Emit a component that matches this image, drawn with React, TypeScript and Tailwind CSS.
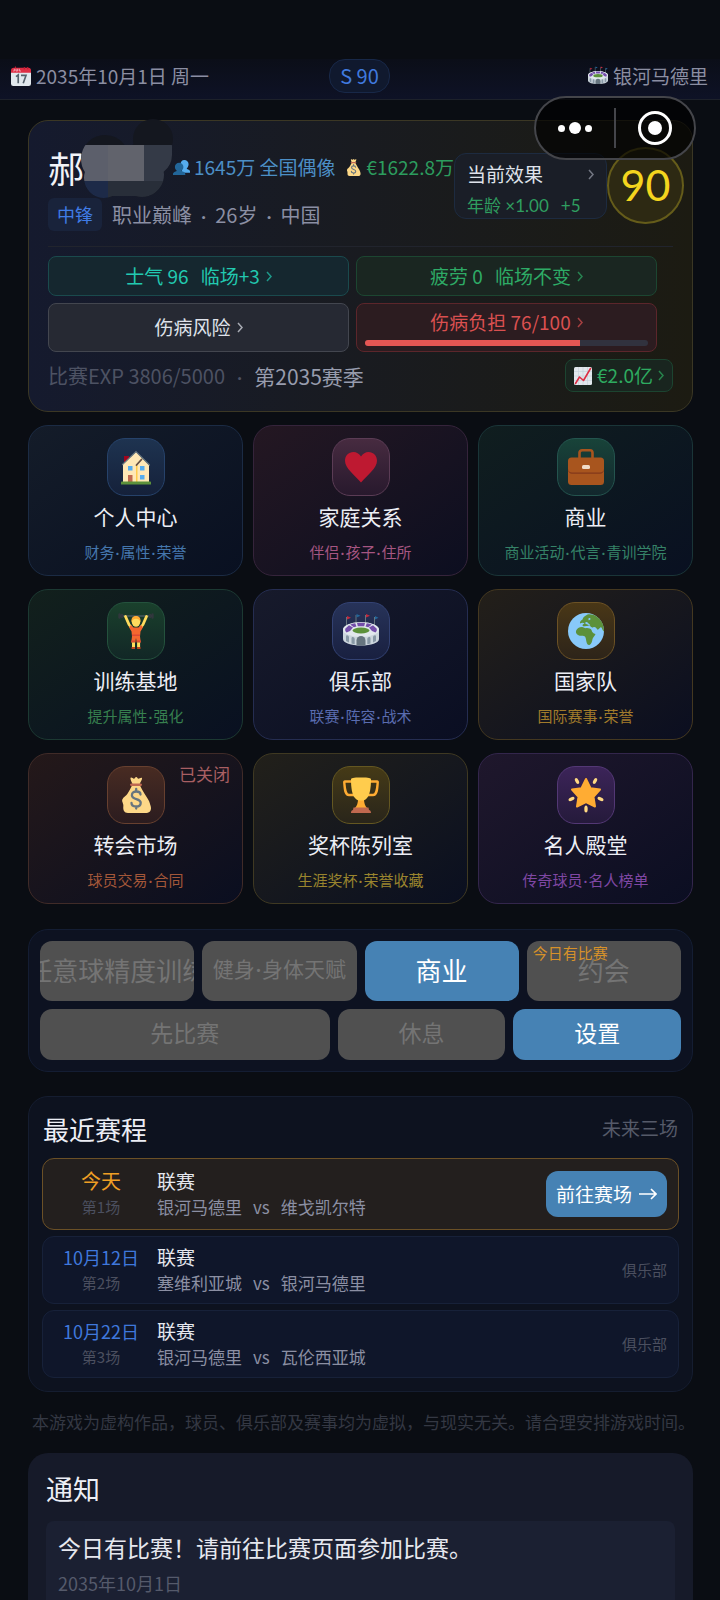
import React from 'react';

type IconProps = { className?: string };

function CalendarIcon({ className }: IconProps) {
    return (
        <svg viewBox="0 0 36 36" className={className} aria-hidden="true">
            <path fill="#e1e8ed" d="M36 32a4 4 0 0 1-4 4H4a4 4 0 0 1-4-4V9h36z" />
            <path fill="#dd2e44" d="M5 3h26a5 5 0 0 1 5 5v4H0V8a5 5 0 0 1 5-5z" />
            <path stroke="#f4abba" strokeWidth="1.6" fill="none" d="M6 5v4H4M9 5v4h3V5M15 5v4h3" />
            <path stroke="#be1931" strokeWidth="2" d="M24 2v4M30 2v4M8 1v3" />
            <path stroke="#55626c" strokeWidth="3" fill="none" d="m9 19 4-3v15M18 17h9l-5 14" />
        </svg>
    );
}

function StadiumIcon({ className }: IconProps) {
    return (
        <svg viewBox="0 0 36 36" className={className} aria-hidden="true">
            <path stroke="#66757f" strokeWidth="1" d="M3.500 4v10M13 2v8M22.500 2v8M31.500 4v10" />
            <path fill="#c4283c" d="m4 3 4 1.800-4 1.800zM23 1l4 1.800-4 1.800z" />
            <path fill="#226699" d="m13.500 1 4 1.800-4 1.800zM32 3l3.500 1.800L32 6.600z" />
            <path fill="#ccd6dd" d="M0 17c0-4.400 8-7.500 18-7.500S36 12.600 36 17v9c0 4-8 6.500-18 6.500S0 30 0 26z" />
            <ellipse cx="18" cy="16.500" rx="18" ry="7.500" fill="#e1e8ed" />
            <g fill="#744eaa">
                <path d="m2.500 15.500 3.500-3.300 4 2.300-3 3.500-3.500 1.500c-1.300-1.200-1.700-2.500-1-4z" />
                <path d="M7.200 11.500c1.600-.6 3.300-1 5-1.300l1.300 3.300-2.800.8zM14 10c2.700-.2 5.300-.2 8 0l-.8 3.300h-6.400zM23.800 10.200c1.700.3 3.400.7 5 1.300l-3.500 2.800-2.800-.8z" />
                <path d="M33.500 15.500 30 12.200l-4 2.300 3 3.500 3.500 1.500c1.300-1.200 1.700-2.500 1-4z" />
            </g>
            <ellipse cx="18" cy="17.500" rx="8.500" ry="2.900" fill="#5c913b" />
            <path fill="#8899a6" d="M3 23.500c0-2.300 3-1.300 3 .700v5.300l-3-1.500zM8.500 25.500c0-2.300 3.200-1.600 3.200.500v5.200l-3.200-.700zM33 23.500c0-2.300-3-1.300-3 .700v5.300l3-1.500zM27.500 25.500c0-2.300-3.200-1.600-3.200.5v5.200l3.200-.7z" />
            <path fill="#66757f" d="M13.500 32.400v-4.900a4.500 4.500 0 0 1 9 0v4.900a60 60 0 0 1-9 0z" />
        </svg>
    );
}

function PeopleIcon({ className }: IconProps) {
    return (
        <svg viewBox="0 0 36 36" className={className} aria-hidden="true">
            <path fill="#55acee" d="M24 2c5 0 9 3.500 9 9 0 4-2 7-4 9 0 2 6 1 7 6v3H19V18c-2-2-3-4-3-7 0-5.500 3-9 8-9z" />
            <path fill="#226699" d="M13 8c5 0 9 3.500 9 9 0 4-2 6-4 8 0 2 8 1.500 8 7v2H0v-2c0-5 8-5 8-7-2-2-4-4-4-8 0-5.500 4-9 9-9z" />
        </svg>
    );
}

function MoneyBagIcon({ className }: IconProps) {
    return (
        <svg viewBox="0 0 36 36" className={className} aria-hidden="true">
            <path fill="#fdd888" d="M31.900 26.500c-.600-3-3.100-6.300-5.200-9.600-1.500-2.300-3.200-5.600-4.700-8.400H14c-1.500 2.800-3 6.100-4.700 8.400-1 1.700-4 2.800-5 5.600-.800 2.600 1.600 4 1 7C5 33 6 36 10 36h17c4.500 0 6-2 6-5 0-1.500-.700-3-1.100-4.500z" />
            <path fill="#fdd888" d="M14.500 7c-1-2.400-2.300-4.800-2-6 1-1.300 2.400.7 3.400.7S17.200 0 18.200 0s1.300 1.700 2.300 1.700S23 0 24 1c.4 1.400-1.500 3.600-2.300 6z" />
            <path fill="#bf6952" d="M13 6.500h10c1.300 0 1.300 2.500 0 2.500H13c-1.300 0-1.300-2.500 0-2.500z" />
            <path stroke="#67757f" strokeWidth="2.300" strokeLinecap="round" fill="none" d="M22.500 17.500c0-2-2-3-4.300-3s-4.300 1.300-4.300 3.700c0 5 8.800 2.700 8.800 7.500 0 2.400-2 3.800-4.500 3.800s-4.700-1.200-4.700-3.500M18.200 11.800v2.500M18.200 29.500v2" />
        </svg>
    );
}

function ChartIcon({ className }: IconProps) {
    return (
        <svg viewBox="0 0 36 36" className={className} aria-hidden="true">
            <rect width="36" height="36" rx="3" fill="#e1e8ed" />
            <path stroke="#c3ced6" strokeWidth="1.200" d="M0 9h36M0 18h36M0 27h36M9 0v36M18 0v36M27 0v36" />
            <path stroke="#dd2e44" strokeWidth="3.200" strokeLinecap="round" strokeLinejoin="round" fill="none" d="m3 33 8-13 8 7L33 3" />
        </svg>
    );
}

function HouseIcon({ className }: IconProps) {
    return (
        <svg viewBox="0 0 36 36" className={className} aria-hidden="true">
            <path fill="#a0041e" d="M6 7h5v7H6z" />
            <path fill="#ffe8b6" d="M5 15 18 3l13 13v17H5z" />
            <path fill="#ffcc4d" d="M18 16h1.500v17H18z" />
            <path stroke="#66757f" strokeWidth="1.200" strokeLinecap="round" fill="none" d="M4.500 15.500 18 2.500l13.500 13.500" />
            <path stroke="#664f43" strokeWidth="1.800" strokeLinecap="round" d="m18.500 16 5-5.500" />
            <path fill="#55acee" d="M10 17h4.500v4.500H10zM22 17h4.500v4.500H22zM22 26h4.500v4.500H22z" />
            <path fill="#c1694f" d="M10 26h4.500v7H10z" />
            <path fill="#5c913b" d="M3.500 32.500h29a1 1 0 0 1 .500 1V35.500H3v-2a1 1 0 0 1 .500-1z" />
        </svg>
    );
}

function HeartIcon({ className }: IconProps) {
    return (
        <svg viewBox="0 0 36 36" className={className} aria-hidden="true">
            <path fill="#be1931" d="M18 7.500C16 4.500 13.500 3 10.500 3 5.500 3 2 6.800 2 11.700c0 7.500 9.500 14 16 21.800 6.500-7.800 16-14.300 16-21.800C34 6.800 30.500 3 25.500 3c-3 0-5.500 1.500-7.500 4.500z" />
        </svg>
    );
}

function BriefcaseIcon({ className }: IconProps) {
    return (
        <svg viewBox="0 0 36 36" className={className} aria-hidden="true">
            <path fill="none" stroke="#a8551e" strokeWidth="2.600" d="M11.500 9.500V3.800a2.500 2.500 0 0 1 2.500-2.500h8a2.500 2.500 0 0 1 2.500 2.500v5.700" />
            <rect y="8.500" width="36" height="27.500" rx="3.500" fill="#a8551e" />
            <path fill="#82381b" d="M0 19.500c0 2.500 1.800 4 4 4h28c2.200 0 4-1.500 4-4v1c0 2.500-1.800 4.200-4 4.200H4c-2.200 0-4-1.700-4-4.200z" />
            <rect x="14" y="16" width="8" height="4" rx="1.500" fill="#f0dcc8" />
        </svg>
    );
}

function LifterIcon({ className }: IconProps) {
    return (
        <svg viewBox="0 0 36 36" className={className} aria-hidden="true">
            <path stroke="#4a5a60" strokeWidth="1.300" strokeLinecap="round" d="M2 3h32" />
            <path stroke="#31373d" strokeWidth="2.400" strokeLinecap="round" d="M1.500 1.500v3M34.500 1.500v3M4 2v2M32 2v2" />
            <path stroke="#ffdc5d" strokeWidth="2.800" strokeLinecap="round" strokeLinejoin="round" fill="none" d="m7.500 3.500 3.500 8 3 4M28.500 3.500l-3.500 8-3 4" />
            <path fill="#f4672f" d="m13 12 2.500 2.500h5L23 12l2 2.200-2.500 4.300-.5 5 .8 6h-4l-.8-4.500-.8 4.500h-4l.8-6-.5-5-2.500-4.300z" />
            <ellipse cx="18" cy="8.500" rx="4.300" ry="5.200" fill="#ffdc5d" />
            <path fill="#ffac33" d="M13.500 9C13 5 15 3 18 3s5 2 4.500 6c-1-2.300-2.300-3.300-4.500-3.300S14.500 6.700 13.500 9z" />
            <path fill="#dd4a33" d="M14 21.500h8v1.500h-8zM13.400 27.500h4v2h-4zM18.700 27.500h4v2h-4z" />
            <path fill="#ffdc5d" d="M14 29.500h3V34h-3zM19.100 29.500h3V34h-3z" />
            <path fill="#c1461f" d="M13.600 34h3.400v2h-3.400zM19.100 34h3.400v2h-3.400z" />
        </svg>
    );
}

function GlobeIcon({ className }: IconProps) {
    return (
        <svg viewBox="0 0 36 36" className={className} aria-hidden="true">
            <circle cx="18" cy="18" r="18" fill="#88c9f9" />
            <path fill="#5c913b" d="M12 10.500c-.500-2 1-3 2.500-4 .500-2 2-3.500 5-5C25 .500 31 4 34 9.500c1.500 3 2 6 2 9-1.500-.500-1.500-3-3-4.500-1.500 1-3 4-4 2-1-1.500-2.500-2.500-4-1.500-1 0-2.500-.500-3-2-1.500-.500-2.500 1-4 .500-1.500.500-3 .500-3.500-.500 0-1 1-1.500 2-2-.800-1.300-3-1-4.500 0z" />
            <path fill="#5c913b" d="M8 18c1-2.500 3-4 6-4 2 .500 3 1.500 5 1 2 .300 3.500.500 4.500 2 .500 2 1.500 3.500 4 4-.500 2-2.500 3-3 5-.300 2-1 5-3 6-1.500.500-2.500-1-3-3s-.500-4-1.500-5.500c-1.500-1.500-4-.500-6-1-2-.500-3.500-2.500-3-4.500z" />
            <path fill="#88c9f9" d="M17 10c1-1.500 2.500-1 3 0s2 1 2 2-1.500 0-2.500-.500-2-.500-2.500-1.500zM20.500 5.500c.800-.800 2-.500 2 .500s-1.500 1.500-2 1z" />
        </svg>
    );
}

function TrophyIcon({ className }: IconProps) {
    return (
        <svg viewBox="0 0 36 36" className={className} aria-hidden="true">
            <path fill="none" stroke="#ffac33" strokeWidth="2.400" strokeLinejoin="round" d="M10 4.500H2c-.700 0-.800.500-.700 1.200C1.800 12 2 18 6 18h5M26 4.500h8c.700 0 .800.500.700 1.200C34.200 12 34 18 30 18h-5" />
            <path fill="#ffac33" d="M15 22h6c0 4 1 7 3 9H12c2-2 3-5 3-9z" />
            <path fill="#ffcc4d" d="M8 2.500C8 1 10 .500 18 .500s10 .500 10 2C28 10 27 18 24 21c-1.500 2-3 2.500-6 2.500S13.500 23 12 21C9 18 8 10 8 2.500z" />
            <path fill="#c1694f" d="M10.500 30.500h15l.500 2.500c2 0 2 3 2 3H8s0-3 2-3z" />
        </svg>
    );
}

function StarIcon({ className }: IconProps) {
    return (
        <svg viewBox="0 0 36 36" className={className} aria-hidden="true">
            <path fill="#ffac33" stroke="#ffac33" strokeWidth="2" strokeLinejoin="round" d="m18 2 4.500 9.200 9.500 1.300-6.500 7.300 1.500 9.700-9-4.500-9 4.500 1.500-9.700L4 12.500l9.500-1.300z" />
            <g fill="#ffd983">
                <ellipse cx="9" cy="4" rx="1.700" ry="3.200" transform="rotate(-28 9 4)" />
                <ellipse cx="27" cy="4" rx="1.700" ry="3.200" transform="rotate(28 27 4)" />
                <ellipse cx="3.500" cy="22" rx="1.700" ry="3.200" transform="rotate(66 3.500 22)" />
                <ellipse cx="32.500" cy="22" rx="1.700" ry="3.200" transform="rotate(-66 32.500 22)" />
                <ellipse cx="18" cy="32" rx="1.700" ry="3.500" />
            </g>
        </svg>
    );
}

/* Pixelated smudge that hides the given name */
function NameMask() {
    return (
        <svg viewBox="0 0 96 84" className="absolute -top-[30px] left-[30px] z-10 h-[84px] w-24" aria-hidden="true">
            <defs>
                <clipPath id="smudge">
                    <circle cx="75" cy="22" r="20" />
                    <circle cx="73" cy="38" r="21" />
                    <circle cx="27" cy="42" r="24" />
                    <circle cx="26" cy="61" r="20" />
                    <circle cx="64" cy="58" r="22" />
                    <rect x="26" y="28" width="45" height="51" />
                    <rect x="71" y="29" width="23" height="8" />
                </clipPath>
            </defs>
            <g clipPath="url(#smudge)">
                <rect width="96" height="84" fill="#14171f" />
                <rect y="28" width="30" height="36" fill="#5c5f6b" />
                <rect x="30" y="28" width="36" height="36" fill="#61636c" />
                <rect x="66" y="28" width="30" height="36" fill="#343a47" />
                <rect y="64" width="30" height="20" fill="#1d2a48" />
                <rect x="30" y="64" width="66" height="20" fill="#282e39" />
            </g>
        </svg>
    );
}

const MENU = [
    { title: '个人中心', sub: '财务·属性·荣誉', icon: HouseIcon, card: 'border-[#1b2b44] from-[#141c29] to-[#091021]', tile: 'border-[#26426a] from-[#1e3350] to-[#15213a]', text: 'text-[#4577ad]' },
    { title: '家庭关系', sub: '伴侣·孩子·住所', icon: HeartIcon, card: 'border-[#35243b] from-[#241722] to-[#0c0e20]', tile: 'border-[#5b3c55] from-[#472b40] to-[#28192d]', text: 'text-[#a65682]' },
    { title: '商业', sub: '商业活动·代言·青训学院', icon: BriefcaseIcon, card: 'border-[#1a3538] from-[#101e1f] to-[#091021]', tile: 'border-[#24544e] from-[#184339] to-[#12272d]', text: 'text-[#358267]' },
    { title: '训练基地', sub: '提升属性·强化', icon: LifterIcon, card: 'border-[#1c3932] from-[#12201c] to-[#091021]', tile: 'border-[#24523d] from-[#1a402c] to-[#122726]', text: 'text-[#37804f]' },
    { title: '俱乐部', sub: '联赛·阵容·战术', icon: StadiumIcon, card: 'border-[#252d51] from-[#171a2b] to-[#0a0e22]', tile: 'border-[#334273] from-[#273359] to-[#192040]', text: 'text-[#5a6cb0]' },
    { title: '国家队', sub: '国际赛事·荣誉', icon: GlobeIcon, card: 'border-[#443820] from-[#231f19] to-[#0b0e20]', tile: 'border-[#6c5225] from-[#493716] to-[#2d2419]', text: 'text-[#a17b2b]' },
    { title: '转会市场', sub: '球员交易·合同', icon: MoneyBagIcon, card: 'border-[#402b28] from-[#241819] to-[#0a0e20]', tile: 'border-[#67402f] from-[#482b22] to-[#2b1c1f]', text: 'text-[#a35739]', badge: '已关闭' },
    { title: '奖杯陈列室', sub: '生涯奖杯·荣誉收藏', icon: TrophyIcon, card: 'border-[#3f3922] from-[#22201a] to-[#0a0f20]', tile: 'border-[#645721] from-[#453a16] to-[#29251a]', text: 'text-[#9a852e]' },
    { title: '名人殿堂', sub: '传奇球员·名人榜单', icon: StarIcon, card: 'border-[#33264c] from-[#1f172c] to-[#0b0e22]', tile: 'border-[#533875] from-[#3c2459] to-[#251a3b]', text: 'text-[#7f47a3]' },
];

const MATCHES = [
    { date: '今天', round: '第1场', type: '联赛', home: '银河马德里', away: '维戈凯尔特', today: true },
    { date: '10月12日', round: '第2场', type: '联赛', home: '塞维利亚城', away: '银河马德里', today: false },
    { date: '10月22日', round: '第3场', type: '联赛', home: '银河马德里', away: '瓦伦西亚城', today: false },
];

/* The CJK middle dot is a full em wide, so dots are set in the latin face */
function Dotted({ text, className }: { text: string; className: string }) {
    return (
        <span className={`inline-flex items-center whitespace-nowrap ${className}`}>
            {text.split('·').map((part, i) => (
                <React.Fragment key={part}>
                    {i > 0 && <span className="font-['Lato',sans-serif]">·</span>}
                    <span>{part}</span>
                </React.Fragment>
            ))}
        </span>
    );
}

function Chevron({ className }: IconProps) {
    return (
        <svg viewBox="0 0 6 11" className={className} aria-hidden="true">
            <path d="m1 1 4 4.500-4 4.500" fill="none" stroke="currentColor" strokeWidth="1.500" />
        </svg>
    );
}

function TopBar() {
    return (
        <header className="grid grid-cols-[1fr_auto_1fr] items-center border-b border-[#1d212a] bg-gradient-to-b from-[#0b0e18] to-[#0e1226] pr-3 pb-[6px] pl-[11px] text-[19px] leading-8 text-[#8b8ea2]">
            <div className="flex items-center gap-[5px]">
                <CalendarIcon className="size-5" />
                <span>2035年10月1日 周一</span>
            </div>
            <div className="rounded-2xl border border-[#182848] bg-[#10192e] px-[10px] text-xl leading-8 text-[#4079de]">S 90</div>
            <div className="flex items-center justify-end gap-[5px]">
                <StadiumIcon className="size-5" />
                <span>银河马德里</span>
            </div>
        </header>
    );
}

/* Host app capsule, floats over the page */
function Capsule() {
    return (
        <div className="absolute top-24 right-6 z-20 flex h-16 w-[162px] items-center rounded-full border-2 border-[#44454a] bg-black/65">
            <button type="button" aria-label="更多" className="flex flex-1 items-center justify-center gap-1">
                <span className="size-[7px] rounded-full bg-white" />
                <span className="size-3 rounded-full bg-white" />
                <span className="size-[7px] rounded-full bg-white" />
            </button>
            <span className="h-10 w-[2px] bg-[#44454a]" />
            <button type="button" aria-label="关闭" className="flex flex-1 items-center justify-center">
                <span className="flex size-[34px] items-center justify-center rounded-full border-[3px] border-white">
                    <span className="size-[14px] rounded-full bg-white" />
                </span>
            </button>
        </div>
    );
}

function PlayerCard() {
    return (
        <section className="rounded-[20px] border border-[#3b3724] bg-gradient-to-r from-[#151a2e] via-[#191b20] to-[#1c1b12] px-[19px] pt-[26px] pb-[19px]">
            <div className="flex items-start">
                <div className="flex-1">
                    <div className="relative flex h-10 items-center justify-between">
                        <h1 className="text-4xl text-[#f1f3f8]">郝</h1>
                        <NameMask />
                        <div className="flex items-center gap-[10px] text-[19px] whitespace-nowrap">
                            <span className="flex items-center gap-1 text-[#4c8fc6]">
                                <PeopleIcon className="size-[17px]" />
                                1645万 全国偶像
                            </span>
                            <span className="flex items-center gap-1 text-[#2c9d5e]">
                                <MoneyBagIcon className="size-[17px]" />
                                €1622.8万
                            </span>
                        </div>
                    </div>
                    <div className="mt-[11px] flex h-[33px] items-center gap-[10px] text-xl text-[#8b8fa3]">
                        <span className="rounded-md bg-[#19233b] px-[9px] text-lg leading-[33px] text-[#407ce6]">中锋</span>
                        <Dotted text="职业巅峰·26岁·中国" className="gap-[9px]" />
                    </div>
                </div>
                <button type="button" className="mt-[6px] h-[66px] w-[153px] rounded-xl border border-[#1d2b40] bg-[#1a1e27] px-3 pt-[7px] text-left leading-[26px]">
                    <span className="flex items-center justify-between text-[19px] text-[#dfe2ea]">
                        当前效果
                        <Chevron className="h-[11px] w-[6px] text-[#737783]" />
                    </span>
                    <span className="mt-[6px] flex gap-3 font-['Lato','Noto_Sans_CJK_SC',sans-serif] text-[17px] text-[#2f9e60]">
                        <span>年龄 ×1.00</span>
                        <span>+5</span>
                    </span>
                </button>
                <div className="-mr-[11px] flex size-[77px] items-center justify-center rounded-full border-2 border-[#655c1a] bg-[#2d2913] font-['Lato',sans-serif] text-[43px] text-[#f4d51e]">90</div>
            </div>

            <div className="mt-[15px] border-t border-[#21242d] pt-[9px]">
                <div className="mr-4 grid grid-cols-2 gap-[7px] text-[19px]">
                    <button type="button" className="flex h-10 items-center justify-center gap-[6px] rounded-lg border border-[#1a4a4d] bg-[#15272f] text-[#22c9b0]">
                        <span className="flex gap-3">
                            <span>士气 96</span>
                            <span>临场+3</span>
                        </span>
                        <Chevron className="h-[11px] w-[6px] opacity-70" />
                    </button>
                    <button type="button" className="flex h-10 items-center justify-center gap-[6px] rounded-lg border border-[#1c4631] bg-[#1a2621] text-[#2eab66]">
                        <span className="flex gap-3">
                            <span>疲劳 0</span>
                            <span>临场不变</span>
                        </span>
                        <Chevron className="h-[11px] w-[6px] opacity-70" />
                    </button>
                    <button type="button" className="flex h-[49px] items-center justify-center gap-[6px] rounded-lg border border-[#43464f] bg-[#262933] text-[#dfe2ea]">
                        伤病风险
                        <Chevron className="h-[11px] w-[6px] opacity-70" />
                    </button>
                    <button type="button" className="flex h-[49px] flex-col justify-between rounded-lg border border-[#5c262b] bg-[#2c1c20] px-2 pt-1 pb-[5px] text-[#da5050]">
                        <span className="flex w-full items-center justify-center gap-[6px] leading-7">
                            伤病负担 76/100
                            <Chevron className="h-[11px] w-[6px] opacity-70" />
                        </span>
                        <span className="block h-[6px] w-full overflow-hidden rounded-full bg-[#31323e]">
                            <span className="block h-full bg-[#e65653]" style={{ width: '76%' }} />
                        </span>
                    </button>
                </div>
            </div>

            <div className="mt-[7px] flex h-[33px] items-center justify-between">
                <p className="flex items-center gap-3 text-xl text-[#4d5263]">
                    <span>比赛EXP 3806/5000</span>
                    <span className="font-['Lato',sans-serif]">·</span>
                    <span className="text-[21px] leading-7 text-[#979cad]">第2035赛季</span>
                </p>
                <button type="button" className="flex h-[33px] items-center gap-[5px] rounded-lg border border-[#1c4430] bg-[#19251f] px-2 text-[19px] text-[#2eab60]">
                    <ChartIcon className="size-[18px]" />
                    €2.0亿
                    <Chevron className="h-[11px] w-[6px] opacity-70" />
                </button>
            </div>
        </section>
    );
}

function MenuGrid() {
    return (
        <nav className="mt-[13px] grid grid-cols-3 gap-x-[10px] gap-y-[13px]">
            {MENU.map(({ title, sub, icon: Icon, card, tile, text, badge }) => (
                <button key={title} type="button" className={`relative flex flex-col items-center rounded-[20px] border bg-gradient-to-br py-3 ${card}`}>
                    <span className={`flex size-[58px] items-center justify-center rounded-[18px] border bg-gradient-to-b ${tile}`}>
                        <Icon className="size-9" />
                    </span>
                    <span className="mt-[6px] text-[21px] leading-7 text-[#eceef5]">{title}</span>
                    <Dotted text={sub} className={`mt-[11px] gap-[1px] text-[15px] leading-[22px] ${text}`} />
                    {badge && <span className="absolute top-[6px] right-3 text-[17px] leading-7 text-[#a85f62]">{badge}</span>}
                </button>
            ))}
        </nav>
    );
}

function ActionDock() {
    return (
        <section className="mt-[25px] rounded-[20px] border border-[#141d33] bg-[#0d1221] p-[11px]">
            <div className="grid grid-cols-4 gap-2 text-[26px]">
                <button type="button" disabled className="flex h-[60px] items-center justify-center overflow-hidden rounded-xl bg-[#505050] pb-1 whitespace-nowrap text-[#747474]">
                    任意球精度训练
                </button>
                <button type="button" disabled className="h-[60px] rounded-xl bg-[#505050] pb-1 text-[21px] text-[#747474]">
                    <Dotted text="健身·身体天赋" className="gap-[1px]" />
                </button>
                <button type="button" className="h-[60px] rounded-xl bg-[#4682b4] pb-1 text-white">商业</button>
                <button type="button" disabled className="relative h-[60px] rounded-xl bg-[#505050] pb-1 text-[#747474]">
                    约会
                    <span className="absolute top-[1px] left-[6px] text-[15px] leading-[22px] text-[#d6912a]">今日有比赛</span>
                </button>
            </div>
            <div className="mt-2 grid grid-cols-[290fr_168fr_168fr] gap-2 text-[23px]">
                <button type="button" disabled className="h-[51px] rounded-xl bg-[#505050] pb-1 text-[#747474]">先比赛</button>
                <button type="button" disabled className="h-[51px] rounded-xl bg-[#505050] pb-1 text-[#747474]">休息</button>
                <button type="button" className="h-[51px] rounded-xl bg-[#4682b4] pb-1 text-white">设置</button>
            </div>
        </section>
    );
}

function Schedule() {
    return (
        <section className="mt-6 rounded-[20px] border border-[#151d30] bg-[#0d121f] px-[13px] pt-4 pb-[13px]">
            <div className="mb-[15px] flex h-[30px] items-center justify-between px-[1px]">
                <h2 className="text-[26px] text-[#eceef5]">最近赛程</h2>
                <span className="text-[19px] text-[#555a69]">未来三场</span>
            </div>
            <ul className="flex flex-col gap-[6px]">
                {MATCHES.map((m) => (
                    <li
                        key={m.date}
                        className={`flex items-center gap-[11px] rounded-xl border pr-[11px] pl-[13px] ${m.today ? 'h-[72px] border-[#6b5026] bg-[#231f1e]' : 'h-[68px] border-[#172139] bg-[#0f162a]'}`}
                    >
                        <div className="w-[90px] text-center">
                            <div className={`leading-[26px] ${m.today ? 'text-xl text-[#ef9f24]' : 'text-lg text-[#3f78dc]'}`}>{m.date}</div>
                            <div className="text-[15px] leading-[26px] text-[#4b4f5f]">{m.round}</div>
                        </div>
                        <div className="flex-1">
                            <div className="text-[19px] leading-[26px] text-[#e6e8ef]">{m.type}</div>
                            <div className="flex gap-[11px] text-[17px] leading-[26px] text-[#8b8fa3]">
                                <span>{m.home}</span>
                                <span>vs</span>
                                <span>{m.away}</span>
                            </div>
                        </div>
                        {m.today ? (
                            <button type="button" className="flex h-[46px] items-center gap-[7px] rounded-xl bg-[#4682b4] px-[10px] text-[19px] text-white">
                                前往赛场
                                <svg viewBox="0 0 18 14" className="h-[14px] w-[18px]" aria-hidden="true">
                                    <path d="M0 7h17M12 2l5 5-5 5" fill="none" stroke="currentColor" strokeWidth="1.600" />
                                </svg>
                            </button>
                        ) : (
                            <span className="text-[15px] text-[#4b4f5f]">俱乐部</span>
                        )}
                    </li>
                ))}
            </ul>
        </section>
    );
}

function Notices() {
    return (
        <section className="mt-[18px] rounded-[20px] bg-[#161a29] px-[18px] pt-[18px] pb-5">
            <h2 className="text-[27px] leading-9 text-[#eceef5]">通知</h2>
            <article className="mt-[14px] rounded-lg bg-[#1b2032] px-3 py-[11px]">
                <p className="text-[23px] leading-[30px] text-[#e6e8ef]">今日有比赛！请前往比赛页面参加比赛。</p>
                <time dateTime="2035-10-01" className="mt-2 block text-lg leading-[26px] text-[#555a6b]">2035年10月1日</time>
            </article>
        </section>
    );
}

export default function App() {
    return (
        <div className="relative h-screen overflow-hidden bg-[#0a0d13] pt-[59px] font-['Noto_Sans_CJK_SC',sans-serif]" lang="zh-CN">
            <TopBar />
            <Capsule />
            <main className="pt-5 pr-[27px] pl-7">
                <PlayerCard />
                <MenuGrid />
                <ActionDock />
                <Schedule />
                <p className="mt-[17px] pl-1 text-[17px] leading-[26px] whitespace-nowrap text-[#343843]">
                    本游戏为虚构作品，球员、俱乐部及赛事均为虚拟，与现实无关。请合理安排游戏时间。
                </p>
                <Notices />
            </main>
        </div>
    );
}
